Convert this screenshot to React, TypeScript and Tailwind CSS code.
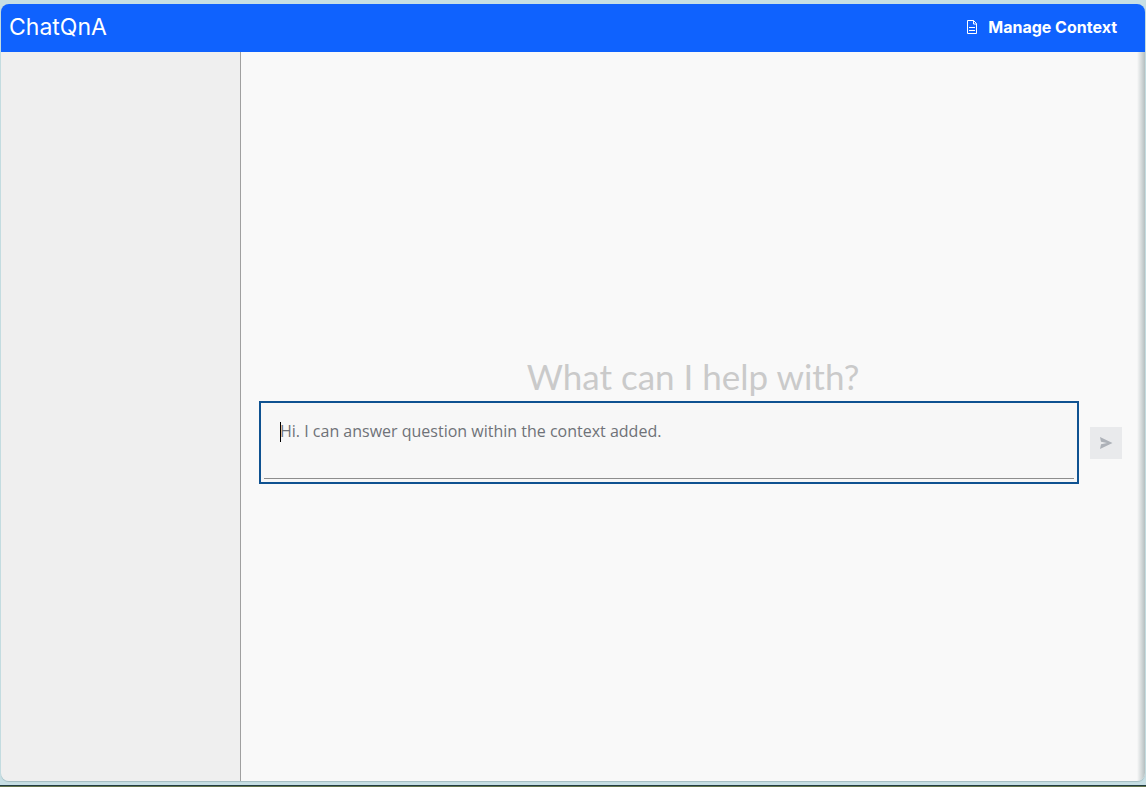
import React, { useState } from 'react';

const DocumentIcon = () => (
    <svg width="12" height="16" viewBox="0 0 12 16" fill="none" stroke="currentColor" aria-hidden="true">
        <path d="M7.5 1.5H1.5V14.5H10.5V4.5L7.5 1.5V5H10.5" />
        <path d="M3 8.5H9M3 11.5H9" />
    </svg>
);

const SendIcon = () => (
    <svg width="14" height="14" viewBox="0 0 14 14" fill="currentColor" aria-hidden="true">
        <path d="M1 1L13.5 7L1 13L2 8.2L8 7L2 5.8Z" />
    </svg>
);

const Header = () => (
    <header className="flex h-12 shrink-0 items-center justify-between bg-[#0f62fe] pb-0.5 pl-2 pr-7 font-['Inter',sans-serif] text-white">
        <h1 className="text-[23px]">ChatQnA</h1>
        <button type="button" className="flex items-center gap-2.5 text-base font-bold">
            <DocumentIcon />
            Manage Context
        </button>
    </header>
);

const PromptForm = () => {
    const [prompt, setPrompt] = useState('');

    return (
        <form className="flex items-center gap-[11px] pl-[18px] pr-[23px]" onSubmit={(e) => e.preventDefault()}>
            <div className="relative flex-1 border-2 border-[#0f5291] bg-[#f7f7f7] px-[3px] pb-[3px]">
                <textarea
                    aria-label="Prompt"
                    rows={2}
                    value={prompt}
                    onChange={(e) => setPrompt(e.target.value)}
                    placeholder="Hi. I can answer question within the context added."
                    className="block h-[76px] w-full resize-none border-b border-[#8d8d8d] px-4 py-4 font-['Open_Sans',sans-serif] text-base text-[#161616] caret-transparent outline-none placeholder:text-[#6f7278]"
                />
                {!prompt && <span className="pointer-events-none absolute left-[19px] top-[19px] h-5 w-px bg-black" />}
            </div>
            <button
                type="submit"
                aria-label="Send"
                disabled={!prompt}
                className="flex size-8 items-center justify-center bg-[#e9eaec] text-[#adb1b8]"
            >
                <SendIcon />
            </button>
        </form>
    );
};

export default function App() {
    return (
        <div className="flex h-screen flex-col bg-[#c7dfe4] font-['Lato',sans-serif]">
            <div className="mx-px mt-1 flex min-h-0 flex-1 flex-col overflow-hidden rounded-lg shadow-[0_1px_1px_#a3bcc0]">
                <Header />
                <div className="flex min-h-0 flex-1">
                    <aside className="w-60 shrink-0 border-r border-[#a0a0a0] bg-[#efefef]" />
                    <main className="flex min-w-0 flex-1 flex-col justify-center bg-[#f9f9f9]">
                        <h2 className="pb-px pt-[3px] text-center text-[35px] leading-[48px] text-[#cacaca]">What can I help with?</h2>
                        <PromptForm />
                    </main>
                    <div className="-ml-2 w-2 bg-linear-to-r from-transparent to-[#b5bfc0]" />
                </div>
            </div>
            <div className="mt-1 h-0.5 shrink-0 border-t border-[#223c40] bg-[#66764f]" />
        </div>
    );
}
